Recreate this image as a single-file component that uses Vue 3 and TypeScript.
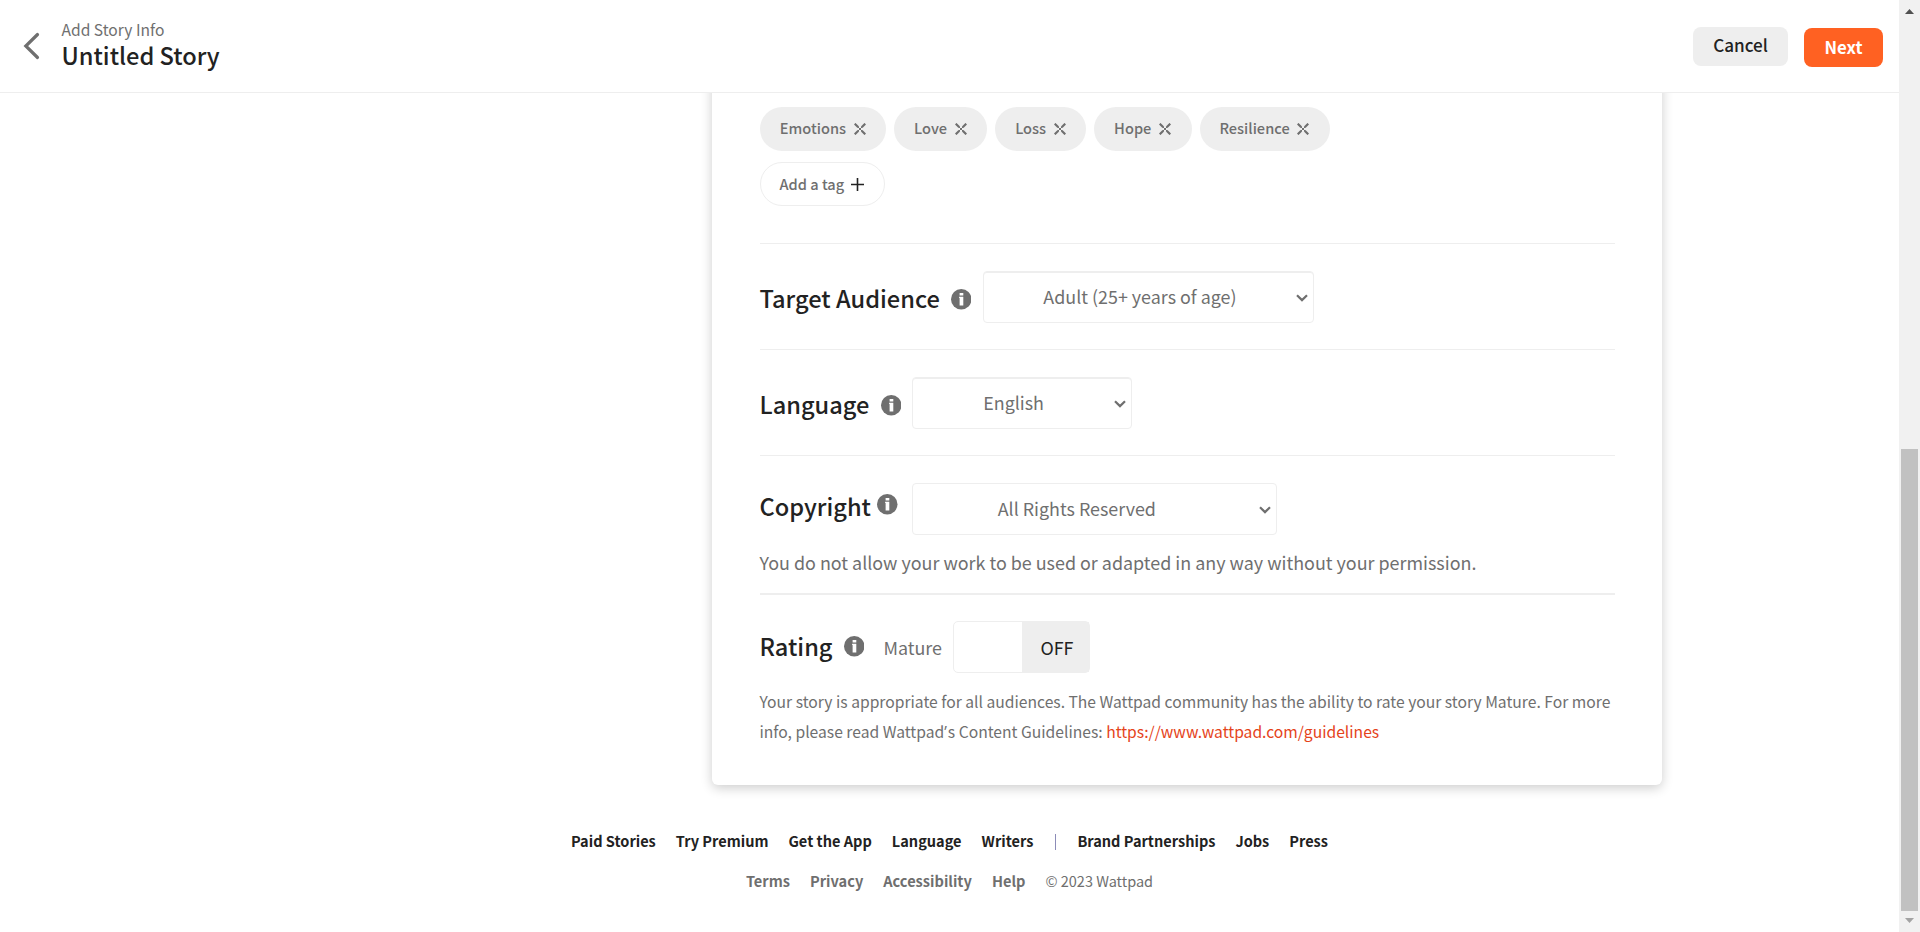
<script setup lang="ts">
const tags: string[] = ['Emotions', 'Love', 'Loss', 'Hope', 'Resilience']

interface Field {
  key: string
  label: string
  value: string
}

const fields: Field[] = [
  { key: 'audience', label: 'Target Audience', value: 'Adult (25+ years of age)' },
  { key: 'language', label: 'Language', value: 'English' },
  { key: 'copyright', label: 'Copyright', value: 'All Rights Reserved' },
]

const primaryLinks: string[] = ['Paid Stories', 'Try Premium', 'Get the App', 'Language', 'Writers']
const companyLinks: string[] = ['Brand Partnerships', 'Jobs', 'Press']
const legalLinks: string[] = ['Terms', 'Privacy', 'Accessibility', 'Help']
</script>

<template>
  <div class="window">
    <div class="page">
      <header class="topbar">
        <svg class="back" viewBox="0 0 17 28" aria-hidden="true">
          <path d="M14.5 2.5 2.8 14l11.7 11.5" />
        </svg>
        <div class="titles">
          <div class="eyebrow">Add Story Info</div>
          <h1 class="title">Untitled Story</h1>
        </div>
        <div class="actions">
          <button type="button" class="btn cancel">Cancel</button>
          <button type="button" class="btn next">Next</button>
        </div>
      </header>

      <main class="card">
        <section class="tags">
          <div class="tag-row">
            <span v-for="tag in tags" :key="tag" class="tag">
              {{ tag }}
              <svg class="x" viewBox="0 0 12 12" aria-hidden="true">
                <path class="arms" d="M.7.7l3.6 3.6M11.3.7 7.7 4.3M.7 11.3l3.6-3.6M11.3 11.3 7.7 7.7" />
                <path class="core" d="M4 4l4 4M8 4 4 8" />
              </svg>
            </span>
          </div>
          <span class="tag add">
            Add a tag
            <svg class="plus" viewBox="0 0 13 13" aria-hidden="true"><path d="M6.5 0v13M0 6.5h13" /></svg>
          </span>
        </section>

        <section v-for="f in fields" :key="f.key" class="field" :class="f.key">
          <div class="line">
            <h2 class="label">{{ f.label }}</h2>
            <svg class="info" viewBox="0 0 20 20" aria-hidden="true">
              <circle cx="10" cy="10" r="10" />
              <path d="M8.4 3.8h3.6v2.6H8.4zM7.9 7.5H12v8.7H8.4V8.8h-.5z" />
            </svg>
            <div class="select">
              <span class="value">{{ f.value }}</span>
              <svg class="caret" viewBox="0 0 12 8" aria-hidden="true"><path d="M1 1.2l5 4.9 5-4.9" /></svg>
            </div>
          </div>
          <p v-if="f.key === 'copyright'" class="note">
            You do not allow your work to be used or adapted in any way without your permission.
          </p>
        </section>

        <section class="rating">
          <div class="line">
            <h2 class="label">Rating</h2>
            <svg class="info" viewBox="0 0 20 20" aria-hidden="true">
              <circle cx="10" cy="10" r="10" />
              <path d="M8.4 3.8h3.6v2.6H8.4zM7.9 7.5H12v8.7H8.4V8.8h-.5z" />
            </svg>
            <span class="mature">Mature</span>
            <div class="toggle"><span class="off">OFF</span></div>
          </div>
          <p class="guidelines">
            Your story is appropriate for all audiences. The Wattpad community has the ability to rate your story Mature. For more<br />
            info, please read Wattpad<span class="apostrophe">’</span>s Content Guidelines: <a class="link">https://www.wattpad.com/guidelines</a>
          </p>
        </section>
      </main>

      <footer class="footer">
        <nav class="links">
          <a v-for="l in primaryLinks" :key="l">{{ l }}</a>
          <span class="bar"></span>
          <a v-for="l in companyLinks" :key="l">{{ l }}</a>
        </nav>
        <nav class="links legal">
          <a v-for="l in legalLinks" :key="l">{{ l }}</a>
          <span class="copy">© 2023 Wattpad</span>
        </nav>
      </footer>
    </div>

    <div class="scrollbar">
      <svg class="arrow" viewBox="0 0 9 5" aria-hidden="true"><path d="M4.5 0 9 5H0z" fill="#505050" /></svg>
      <div class="thumb"></div>
      <svg class="arrow down" viewBox="0 0 9 5" aria-hidden="true"><path d="M0 0h9L4.5 5z" fill="#a3a3a3" /></svg>
    </div>
  </div>
</template>

<style>
body {
  margin: 0;
  background: #fff;
}
</style>

<style scoped>
.window {
  display: flex;
  width: 1920px;
  height: 932px;
  overflow: hidden;
  font-family: 'Noto Sans CJK SC', 'Noto Sans', sans-serif;
  color: #6f6f6f;
  font-size: 17.9px;
  white-space: nowrap;
}
.page {
  width: 1899px;
  height: 932px;
}
h1,
h2,
p {
  margin: 0;
}
svg {
  display: block;
  flex: none;
}

/* Top bar */
.topbar {
  position: relative;
  z-index: 1;
  box-sizing: border-box;
  display: flex;
  align-items: flex-start;
  height: 93px;
  padding: 0 16px 0 23px;
  background: #fff;
  border-bottom: 1px solid #eee;
}
.back {
  width: 17px;
  height: 28px;
  margin-top: 32px;
  fill: none;
  stroke: #6f6f6f;
  stroke-width: 3.2;
  stroke-linecap: round;
}
.titles {
  margin: 18px 0 0 21.5px;
}
.eyebrow {
  font-size: 15.6px;
  line-height: 22px;
}
.title {
  font-size: 23.6px;
  line-height: 31px;
  font-weight: 500;
  color: #222;
}
.actions {
  display: flex;
  align-items: flex-start;
  gap: 16px;
  margin: 27px 0 0 auto;
}
.btn {
  box-sizing: border-box;
  height: 39px;
  padding: 0;
  border: 0;
  border-radius: 8px;
  font-family: inherit;
}
.cancel {
  width: 95px;
  padding-bottom: 4px;
  background: #eee;
  color: #222;
  font-size: 17.1px;
  line-height: 35px;
  font-weight: 500;
}
.next {
  width: 79px;
  margin-top: 1px;
  background: #ff6122;
  color: #fff;
  font-size: 16.8px;
  line-height: 39px;
  font-weight: 700;
}

/* Story card: its top edge continues behind the top bar */
.card {
  box-sizing: border-box;
  width: 950px;
  height: 712px;
  margin: -20px 0 0 712px;
  padding: 20px 47px 0 48px;
  border-radius: 6px;
  background: #fff;
  box-shadow: 0 3px 12px rgba(0, 0, 0, 0.2);
}
.tags {
  box-sizing: border-box;
  height: 151px;
  padding-top: 14px;
  border-bottom: 1px solid #eee;
}
.tag-row {
  display: flex;
  gap: 8px;
  margin-bottom: 11px;
}
.tag {
  box-sizing: border-box;
  display: inline-flex;
  align-items: center;
  gap: 7.6px;
  height: 44px;
  padding: 0 20.7px 2px 19.8px;
  border-radius: 22px;
  background: #eee;
  font-size: 14.6px;
  line-height: 42px;
  font-weight: 500;
}
.x {
  width: 12px;
  height: 12px;
  margin-top: 1px;
  fill: none;
  stroke: #6f6f6f;
}
.arms {
  stroke-width: 2.2;
}
.core {
  stroke-width: 1;
}
.add {
  padding: 0 20px 0 18.5px;
  border: 1px solid #eee;
  background: #fff;
  gap: 6.8px;
}
.plus {
  width: 13px;
  height: 13px;
  stroke: #222;
  stroke-width: 1.6;
}

.line {
  display: flex;
  align-items: flex-start;
}
.label {
  margin-left: -0.5px;
  font-size: 23.6px;
  line-height: 30px;
  font-weight: 500;
  color: #222;
}
.info {
  width: 20.5px;
  height: 20.5px;
  fill: #6f6f6f;
}
.info path {
  fill: #fff;
}
.field {
  box-sizing: border-box;
  height: 106px;
  padding-top: 27px;
  border-bottom: 1px solid #eee;
}
.select {
  box-sizing: border-box;
  display: flex;
  align-items: flex-start;
  height: 52px;
  padding-right: 5px;
  border: 1px solid #eee;
  border-radius: 4px;
}
.value {
  flex: 1;
  line-height: 48px;
}
.caret {
  width: 12px;
  height: 8px;
  margin-top: 22px;
  fill: none;
  stroke: #6f6f6f;
  stroke-width: 2.2;
}
.audience .label,
.language .label {
  margin-top: 12px;
}
.audience .info {
  margin: 18px 12px 0 11px;
}
.language .info {
  margin: 18px 11px 0 11.3px;
}
.audience .select,
.language .select {
  box-shadow: inset 0 1px 0 #eee;
}
.audience .select {
  width: 331px;
  padding-left: 59px;
}
.language .select {
  width: 220px;
  padding-left: 70px;
}
.copyright {
  height: 139px;
  border-bottom-width: 2px;
}
.copyright .label {
  margin-top: 8px;
}
.copyright .info {
  margin: 11px 14px 0 6.3px;
}
.copyright .select {
  width: 365px;
  padding-left: 85px;
}
.note {
  margin: 12px 0 0 -0.5px;
  font-size: 17.91px;
  line-height: 30px;
}

/* Rating */
.rating {
  padding-top: 26px;
}
.rating .label {
  margin-top: 10px;
}
.rating .info {
  margin: 15px 0 0 11.4px;
}
.mature {
  margin: 11px 11px 0 19px;
  line-height: 30px;
}
.toggle {
  box-sizing: border-box;
  display: flex;
  justify-content: flex-end;
  width: 137px;
  height: 52px;
  border: 1px solid #eee;
  border-radius: 5px;
}
.off {
  box-sizing: border-box;
  width: 67px;
  padding-left: 3px;
  background: #eee;
  color: #222;
  line-height: 50px;
  text-align: center;
}
.guidelines {
  margin: 14px 0 0 -0.5px;
  font-size: 15.66px;
  line-height: 30px;
}
.apostrophe {
  margin-right: 1px;
  font-family: 'Open Sans', sans-serif;
  line-height: 1;
}
.link {
  color: #e5431a;
}

/* Footer */
.footer {
  padding-top: 36px;
  font-size: 14.56px;
  line-height: 40px;
}
.links {
  display: flex;
  align-items: center;
  justify-content: center;
  gap: 20px;
  height: 40px;
  font-weight: 700;
  color: #222;
}
.legal {
  font-size: 14.6px;
  color: #6f6f6f;
}
.bar {
  width: 1px;
  height: 16px;
  margin: 2px 1.5px 0;
  background: #8c8cb8;
}
.copy {
  font-size: 14.5px;
  font-weight: 400;
}

/* Window scrollbar */
.scrollbar {
  box-sizing: border-box;
  display: flex;
  flex-direction: column;
  align-items: center;
  width: 21px;
  height: 932px;
  padding: 9px 0;
  background: #f1f1f1;
}
.arrow {
  width: 9px;
  height: 5px;
}
.thumb {
  width: 17px;
  height: 462px;
  margin-top: 435px;
  background: #c1c1c1;
}
.down {
  margin-top: 7px;
}
</style>
